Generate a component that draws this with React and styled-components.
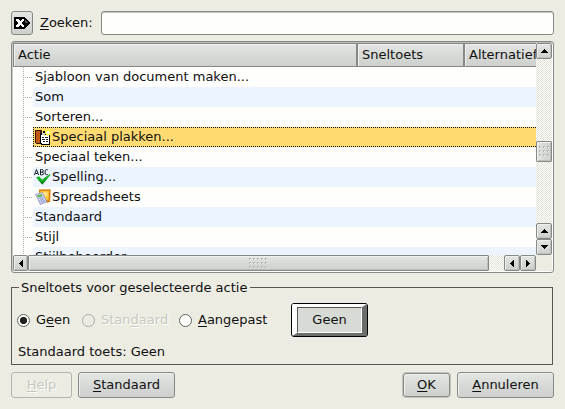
import React from "react";
import styled, { createGlobalStyle, css } from "styled-components";

const Global = createGlobalStyle`
  * { box-sizing: border-box; }
  body { margin: 0; background: #ecece3; }
`;

const bevel = "linear-gradient(#e4e6e4, #d8dad7 50%, #cdd0cd)";

const Dialog = styled.div`
  width: 565px;
  height: 409px;
  padding: 11px 11px 0;
  overflow: hidden;
  background: #ecece3;
  color: #101010;
  font: 13px/16px "DejaVu Sans", sans-serif;
  white-space: nowrap;
  display: flex;
  flex-direction: column;
`;

const SearchRow = styled.div`
  display: flex;
  align-items: center;
  height: 24px;
  flex: none;
`;

const ClearButton = styled.button`
  width: 22px;
  height: 24px;
  padding: 0;
  display: grid;
  place-items: center;
  border: 1px solid #868a87;
  border-radius: 3px;
  background: ${bevel};
`;

const SearchLabel = styled.label`
  width: 61px;
  margin-left: 7px;
`;

const SearchInput = styled.input`
  width: 453px;
  height: 24px;
  border: 1px solid #868a87;
  border-radius: 3px;
  background: #fefefc;
  box-shadow: inset 0 1px #c3c5c2;
  outline: none;
`;

const ListFrame = styled.div`
  width: 543px;
  height: 232px;
  margin-top: 6px;
  flex: none;
  padding: 1px;
  border: 1px solid #868a87;
  border-radius: 3px;
  background: #fefefc;
  box-shadow: inset 0 1px #b9b9b0, inset 1px 0 #c9cbc8;
  display: grid;
  grid-template-columns: 523px 16px;
  grid-template-rows: 212px 16px;
`;

const Table = styled.div`
  overflow: hidden;
`;

const Header = styled.div`
  display: flex;
  height: 24px;
  border-top: 1px solid #868a87;
  border-bottom: 1px solid #868a87;
  background: ${bevel};
`;

const HeaderCell = styled.div`
  width: ${(p) => p.$w}px;
  flex: none;
  padding: 3px 0 0 4px;
  border-left: 1px solid #868a87;
  border-right: 1px solid #868a87;
  box-shadow: inset 1px 1px #eff0ee;
`;

const Rows = styled.div`
  background: repeating-linear-gradient(#b0b0ac 0 1px, transparent 1px 2px) 10px 0 / 1px 100% no-repeat;
`;

const Row = styled.div`
  display: flex;
  height: 20px;
  padding-left: 10px;
  align-items: stretch;
`;

const Branch = styled.div`
  width: 10px;
  flex: none;
  background: repeating-linear-gradient(90deg, #b0b0ac 0 1px, transparent 1px 2px) 0 10px / 9px 1px no-repeat;
`;

const Cell = styled.div`
  flex: 1;
  display: flex;
  padding: 2px 0 0 ${(p) => (p.$icon ? 1 : 2)}px;
  background: ${(p) => (p.$alt ? "#ecf4ff" : "transparent")};
  ${(p) =>
    p.$selected &&
    css`
      background:
        repeating-linear-gradient(90deg, #101010 0 1px, #ffdb72 1px 2px) 0 0 / 100% 1px no-repeat,
        repeating-linear-gradient(90deg, #101010 0 1px, #ffdb72 1px 2px) 0 100% / 100% 1px no-repeat,
        repeating-linear-gradient(#101010 0 1px, #ffdb72 1px 2px) 0 0 / 1px 100% no-repeat,
        #ffdb72;
    `}
`;

const IconSlot = styled.span`
  width: 18px;
  height: 18px;
  padding-left: 1px;
  flex: none;
  svg { display: block; }
`;

const checker = css`
  background: repeating-conic-gradient(#e3e3da 0 25%, #fefefc 0 50%) 0 0 / 2px 2px;
`;

const VScroll = styled.div`
  display: grid;
  grid-template-rows: 16px 82px 21px 61px 16px 16px;
  ${checker}
`;

const HScroll = styled.div`
  display: grid;
  grid-template-columns: 15px 461px 15px 16px 16px;
  ${checker}
`;

const ScrollPart = styled.div`
  display: grid;
  place-items: center;
  border: 1px solid #868a87;
  border-radius: ${(p) => (p.$square ? 1 : 2)}px;
  background: ${(p) =>
    p.$upright ? "linear-gradient(90deg, #e4e6e4, #cdd0cd)" : bevel};
  box-shadow: inset 1px 1px #eff0ee, inset -1px -1px #bcbfbc;
`;

const Corner = styled.div`
  background: #ecece3;
`;

const Group = styled.fieldset`
  width: 542px;
  height: 85px;
  margin: 7px 0 0;
  padding: 0 0 0 5px;
  flex: none;
  border: 1px solid #565652;
  min-width: 0;
`;

const Legend = styled.legend`
  height: 15px;
  margin-left: 2px;
  padding: 0 3px 0 2px;
`;

const Choices = styled.div`
  display: flex;
  align-items: center;
  height: 34px;
  margin-top: 8px;
`;

const Choice = styled.label`
  display: flex;
  align-items: center;
  gap: 6px;
  width: ${(p) => p.$w}px;
  color: ${(p) => (p.$off ? "#c8c8c0" : "#101010")};
  text-shadow: ${(p) => (p.$off ? "1px 1px #fefefc" : "none")};
`;

const Radio = styled.span`
  width: 13px;
  height: 13px;
  flex: none;
  border: 1px solid ${(p) => (p.$off ? "#aaaaa4" : "#62655f")};
  border-radius: 50%;
  background: ${(p) =>
    p.$off ? "#ecece3" : p.$on ? "radial-gradient(circle, #222 0 3.2px, #fefefc 4px)" : "#fefefc"};
`;

const KeyButton = styled.button`
  width: 77px;
  height: 34px;
  padding: 0;
  margin-left: 3px;
  border: 1px solid #000;
  border-radius: 3px;
  background: #6c6e6c;
  display: block;
  overflow: hidden;
`;

const KeyFace = styled.span`
  display: block;
  width: 75px;
  height: 32px;
  border-style: solid;
  border-width: 3px 5px 3px 5px;
  border-color: #fff #6c6e6c #6c6e6c #fff;
`;

const KeyTop = styled.span`
  display: block;
  height: 26px;
  border: 1px solid;
  border-color: #555 #fff #fff #555;
  background: #d8dad6;
  font: 13px/24px "DejaVu Sans", sans-serif;
  color: #101010;
`;

const DefaultKey = styled.div`
  margin: 7px 0 0 1px;
`;

const Buttons = styled.div`
  display: flex;
  margin-top: 7px;
  height: 26px;
  flex: none;
`;

const Button = styled.button`
  width: ${(p) => p.$w}px;
  height: 26px;
  margin-right: 6px;
  padding: 0 0 1px;
  border: 1px solid #868a87;
  border-radius: 3px;
  background: ${bevel};
  box-shadow: inset 1px 1px #eff0ee;
  font: 13px/16px "DejaVu Sans", sans-serif;
  color: #101010;
  ${(p) =>
    p.$off &&
    css`
      border-color: #b4b4ae;
      background: #ecece3;
      box-shadow: none;
      color: #c8c8c0;
      text-shadow: 1px 1px #fefefc;
    `}
  ${(p) =>
    p.$primary &&
    css`
      height: 24px;
      margin: 1px 7px 0 auto;
      box-shadow: 0 0 0 1px #c3c4bc, inset 1px 1px #eff0ee;
    `}
  &:last-child { margin-right: 0; }
`;

const Key = styled.span`
  text-decoration: underline;
  text-underline-offset: 2px;
  text-decoration-thickness: 1px;
`;

const ClearIcon = () => (
  <svg width="16" height="12" viewBox="0 0 16 12" shapeRendering="crispEdges">
    <path d="M0 0h11v1h1v1h1v1h1v1h1v1h1v2h-1v1h-1v1h-1v1h-1v1h-1v1H0z" fill="#000" />
    <path d="M2 2h3v1h1v1h1V3h1V2h2v2H9v1H8v2h1v1h1v2H8V9H7V8H6v1H5v1H2V8h1V7h1V5H3V4H2z" fill="#fff" />
    <path d="M11 3h1v1h1v1h1v1h-3z" fill="#555" />
  </svg>
);

const arrows = {
  up: "M0 4h7v-1h-1v-1h-1v-1h-1v-1h-1v1h-1v1h-1v1h-1z",
  down: "M0 0h7v1h-1v1h-1v1h-1v1h-1v-1h-1v-1h-1v-1h-1z",
  left: "M4 0v7h-1v-1h-1v-1h-1v-1h-1v-1h1v-1h1v-1h1v-1z",
  right: "M0 0v7h1v-1h1v-1h1v-1h1v-1h-1v-1h-1v-1h-1v-1z",
};

const Arrow = ({ dir }) => {
  const tall = dir === "left" || dir === "right";
  return (
    <svg width={tall ? 4 : 7} height={tall ? 7 : 4} shapeRendering="crispEdges">
      <path d={arrows[dir]} fill="#000" />
    </svg>
  );
};

const Grip = ({ cols }) => (
  <svg width={cols * 4 - 1} height="11" shapeRendering="crispEdges">
    {Array.from({ length: cols * 3 }, (_, i) => {
      const x = (i % cols) * 4;
      const y = Math.floor(i / cols) * 4;
      return (
        <g key={i}>
          <path d={`M${x} ${y}h2v1h-1v1h-1z`} fill="#b3b6b3" />
          <path d={`M${x + 1} ${y + 1}h1v1h-1z`} fill="#f4f5f3" />
        </g>
      );
    })}
  </svg>
);

const PasteIcon = () => (
  <svg width="16" height="16" viewBox="0 0 16 16" shapeRendering="crispEdges">
    <path d="M0 1h7v14H1v-1H0z" fill="#3c1806" />
    <path d="M1 2h4v12H1z" fill="#c4570f" />
    <path d="M5 5h1V4h2V2h2v2h2v1h3v11H6v-1H5z" fill="#000" />
    <path d="M6 6h8v9H7v-1H6z" fill="#fff" />
    <path d="M7 4h3v2H7z" fill="#c9c9c4" />
    <path d="M7 8h2v1H7zM10 8h3v1h-3zM7 10h3v1H7zM11 10h2v1h-2zM8 12h2v1H8zM11 12h2v1h-2z" fill="#222" />
    <path d="M12 0h1v1h2v1h1v3h-1v1h-2v1h-1V6h-1V5h-1V2h1V1h1zM9 0h1v1H9zM15 0h1v1h-1zM9 6h1v1H9zM15 6h1v1h-1z" fill="#fff23c" />
    <path d="M12 2h2v1h1v1h-1v1h-2V4h-1V3h1z" fill="#fffff0" />
  </svg>
);

const SpellIcon = () => (
  <svg width="16" height="16" viewBox="0 0 16 16" overflow="visible">
    <g fill="none" stroke="#182028" strokeWidth="1">
      <path d="M-.6 6 1.5.5 3.6 6M.3 4.5h2.5" />
      <path d="M5.5 6V.5h1.2q1.6 0 1.6 1.3T6.7 3.2H5.5m1.2 0q2 0 2 1.4T6.7 5.8H5.5" />
      <path d="M13 1.2Q12.4.5 11.6.5 10 .5 10 3.1q0 2.7 1.7 2.7.8 0 1.4-.7" />
    </g>
    <path d="m1 8.5 3-1.2L7 10.5 15 5l.5 1L7.3 15.5z" fill="#17b526" />
    <path d="M2.5 10 7 13.5 13 8.5 7.3 15.5z" fill="#087a16" />
  </svg>
);

const SheetsIcon = () => (
  <svg width="16" height="16" viewBox="0 0 16 16">
    <path d="M3.8.6 15.6.2l-.4 12.6-2.6 1L5 12z" fill="#d98411" />
    <path d="M5 2.2 14 1.7l-.5 9L6 11z" fill="#ffc83a" />
    <path d="m7 3.5 5.5-.3-.3 4-4.5.3z" fill="#ffe58a" />
    <path d="M0 5 7.6 3.2l4.7 9.5L5.3 16z" fill="#8790c4" />
    <path d="M1 5.6 7.1 4.1l4.1 8.2-5.5 2.6z" fill="#dde1f6" />
    <path d="m2 6.3 4.6-1.2.9 1.9L3 8.5z" fill="#5cb548" />
    <path d="m3.4 9.7 4.9-1.8M4.3 11.6l4.8-1.9M5.2 13.4l4.8-2M5 8.5l2.5 5.2M6.9 7.8l2.3 5" stroke="#8a94cc" strokeWidth=".7" />
  </svg>
);

const icons = { paste: PasteIcon, spell: SpellIcon, sheets: SheetsIcon };

const actions = [
  { name: "Sjabloon van document maken..." },
  { name: "Som" },
  { name: "Sorteren..." },
  { name: "Speciaal plakken...", icon: "paste", selected: true },
  { name: "Speciaal teken..." },
  { name: "Spelling...", icon: "spell" },
  { name: "Spreadsheets", icon: "sheets" },
  { name: "Standaard" },
  { name: "Stijl" },
  { name: "Stijlbeheerder" },
];

const ActionRow = ({ action, alt }) => {
  const Icon = icons[action.icon];
  return (
    <Row>
      <Branch />
      <Cell $alt={alt} $selected={action.selected} $icon={!!Icon}>
        {Icon && <IconSlot><Icon /></IconSlot>}
        {action.name}
      </Cell>
    </Row>
  );
};

export default function App() {
  return (
    <Dialog>
      <Global />
      <SearchRow>
        <ClearButton><ClearIcon /></ClearButton>
        <SearchLabel><Key>Z</Key>oeken:</SearchLabel>
        <SearchInput />
      </SearchRow>
      <ListFrame>
        <Table>
          <Header>
            <HeaderCell $w={344}>Actie</HeaderCell>
            <HeaderCell $w={107}>Sneltoets</HeaderCell>
            <HeaderCell $w={107}>Alternatief</HeaderCell>
          </Header>
          <Rows>
            {actions.map((a, i) => <ActionRow key={a.name} action={a} alt={i % 2 === 1} />)}
          </Rows>
        </Table>
        <VScroll>
          <ScrollPart><Arrow dir="up" /></ScrollPart>
          <span />
          <ScrollPart $square $upright><Grip cols={3} /></ScrollPart>
          <span />
          <ScrollPart><Arrow dir="up" /></ScrollPart>
          <ScrollPart><Arrow dir="down" /></ScrollPart>
        </VScroll>
        <HScroll>
          <ScrollPart><Arrow dir="left" /></ScrollPart>
          <ScrollPart $square><Grip cols={5} /></ScrollPart>
          <span />
          <ScrollPart><Arrow dir="left" /></ScrollPart>
          <ScrollPart><Arrow dir="right" /></ScrollPart>
        </HScroll>
        <Corner />
      </ListFrame>
      <Group>
        <Legend>Sneltoets voor geselecteerde actie</Legend>
        <Choices>
          <Choice $w={65}><Radio $on /><span>G<Key>e</Key>en</span></Choice>
          <Choice $w={97} $off><Radio $off /><span>Stan<Key>d</Key>aard</span></Choice>
          <Choice $w={109}><Radio /><span><Key>A</Key>angepast</span></Choice>
          <KeyButton><KeyFace><KeyTop>Geen</KeyTop></KeyFace></KeyButton>
        </Choices>
        <DefaultKey>Standaard toets: Geen</DefaultKey>
      </Group>
      <Buttons>
        <Button $w={61} $off><Key>H</Key>elp</Button>
        <Button $w={97}><Key>S</Key>tandaard</Button>
        <Button $w={47} $primary><Key>O</Key>K</Button>
        <Button $w={97}><Key>A</Key>nnuleren</Button>
      </Buttons>
    </Dialog>
  );
}
